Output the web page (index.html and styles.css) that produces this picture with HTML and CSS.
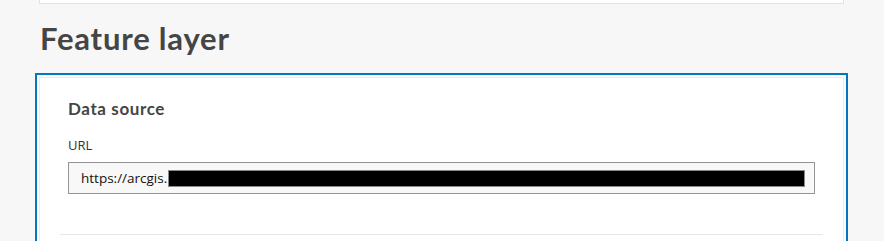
FILE: index.html
```html
<!DOCTYPE html>
<html>
<head>
<meta charset="utf-8">
<link rel="stylesheet" href="styles.css">
</head>
<body>
<div class="top-card"></div>
<h1 class="page-title">Feature layer</h1>
<div class="focus-ring">
  <div class="card">
    <div class="section">
      <h2 class="section-title">Data source</h2>
      <label class="field-label">URL</label>
      <div class="input"><span class="input-text">https://arcgis.</span><span class="redact"></span></div>
    </div>
    <div class="divider"></div>
  </div>
</div>
</body>
</html>
```

FILE: styles.css
```css
html, body {
  margin: 0;
  padding: 0;
  background: #f7f7f7;
  font-family: "Lato", "Open Sans", sans-serif;
  color: #4a4a4a;
  overflow: hidden;
}

.top-card {
  margin-left: 39px;
  width: 805px;
  height: 4px;
  box-sizing: border-box;
  background: #fff;
  border: 1px solid #e2e2e2;
  border-top: none;
}

.page-title {
  margin: 14px 0 0 40px;
  font-size: 31px;
  line-height: 40px;
  font-weight: 700;
  color: #454545;
  letter-spacing: 0.8px;
}

.focus-ring {
  margin: 15px 0 0 35px;
  width: 813px;
  height: 200px;
  box-sizing: border-box;
  border: 2px solid #0079c1;
  padding: 2px;
  background: #fff;
}

.card {
  height: 100%;
  box-sizing: border-box;
  border: 1px solid #ebebeb;
  padding: 0 20px;
  display: flex;
  flex-direction: column;
}

.section {
  padding: 19px 8px 0 8px;
  display: flex;
  flex-direction: column;
}

.section-title {
  margin: 0;
  font-size: 17px;
  line-height: 24px;
  font-weight: 700;
  color: #454545;
  letter-spacing: 0.6px;
}

.field-label {
  margin-top: 15px;
  font-size: 13px;
  line-height: 18px;
  color: #323232;
  font-family: "Open Sans", sans-serif;
}

.input {
  margin-top: 8px;
  height: 32px;
  box-sizing: border-box;
  border: 1px solid #959595;
  background: #f8f8f8;
  display: flex;
  align-items: center;
  padding: 0 9px 0 12px;
}

.input-text {
  font-family: "Open Sans", sans-serif;
  font-size: 13.5px;
  color: #111;
}

.redact {
  flex: 1;
  height: 15px;
  background: #000;
  border: 1px solid #8a8a8a;
  margin-left: 1px;
}

.divider {
  margin-top: 40px;
  height: 1px;
  background: #e6e6e6;
}
```
